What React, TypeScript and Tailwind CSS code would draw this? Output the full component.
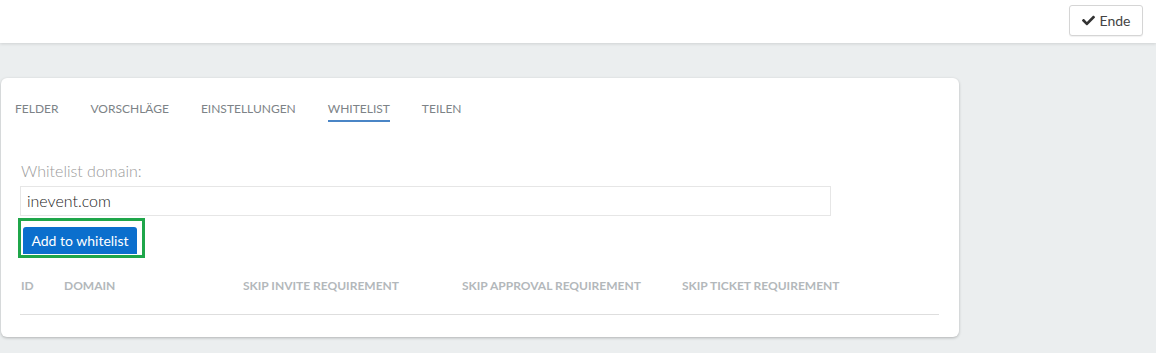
import React from "react";
import { FaCheck } from "react-icons/fa";

const tabs = ["FELDER", "VORSCHLÄGE", "EINSTELLUNGEN", "WHITELIST", "TEILEN"];

export default function App() {
  return (
    <div
      className="w-[1156px] h-[353px] bg-[#ebeeef] overflow-hidden"
      style={{ fontFamily: "Lato, 'Open Sans', sans-serif" }}
    >
      <header className="h-[43px] bg-white flex items-start justify-end pr-[13px] pt-[5px] shadow-[0_1px_3px_rgba(0,0,0,0.12)] relative">
        <button className="h-[31px] w-[74px] flex items-center justify-center gap-[5px] border border-[#d5d5d5] rounded-[3px] bg-white text-[14px] text-[#444] shadow-[0_1px_1px_rgba(0,0,0,0.06)]">
          <FaCheck className="w-[13px] h-[13px] text-[#333]" />
          <span>Ende</span>
        </button>
      </header>

      <div className="pt-[35px] pl-[1px]">
        <div className="w-[958px] h-[259px] bg-white rounded-[6px] shadow-[0_1px_3px_rgba(0,0,0,0.25)] pt-[23px] px-[14px]">
          <nav className="flex gap-[32px] text-[12px] text-[#7d8387] h-[20px]">
            {tabs.map((t) => (
              <div key={t} className="relative leading-[14px] pt-[1px]">
                {t}
                {t === "WHITELIST" && (
                  <div className="absolute left-0 right-0 top-[19px] h-[2px] bg-[#4a85c6]" />
                )}
              </div>
            ))}
          </nav>

          <div className="pl-[6px] pr-[5px]">
            <div className="mt-[40px] text-[16px] font-light text-[#9a9a9a] leading-[19px]">
              Whitelist domain:
            </div>
            <div className="mt-[6px] w-[811px] h-[30px] border border-[#e6e6e6] flex items-center pl-[6px] text-[16px] font-light text-[#222] -ml-[1px]">
              inevent.com
            </div>
            <div className="mt-[2px] -ml-[3px] inline-flex border-[3px] border-[#1fa64a] pl-[2px] pt-[6px] pr-[5px] h-[40px]">
              <button className="h-[27px] w-[114px] bg-[#0b6fcd] rounded-t-[3px] text-white text-[14px] leading-[27px] text-center">
                Add to whitelist
              </button>
            </div>

            <div className="mt-[21px] flex text-[12px] font-bold text-[#b3b8bb] leading-[14px]">
              <div className="w-[43px]">ID</div>
              <div className="w-[179px]">DOMAIN</div>
              <div className="w-[219px]">SKIP INVITE REQUIREMENT</div>
              <div className="w-[220px]">SKIP APPROVAL REQUIREMENT</div>
              <div>SKIP TICKET REQUIREMENT</div>
            </div>
            <div className="mt-[21px] h-[1px] bg-[#dedede] w-[919px] -ml-[1px]" />
          </div>
        </div>
      </div>
    </div>
  );
}
